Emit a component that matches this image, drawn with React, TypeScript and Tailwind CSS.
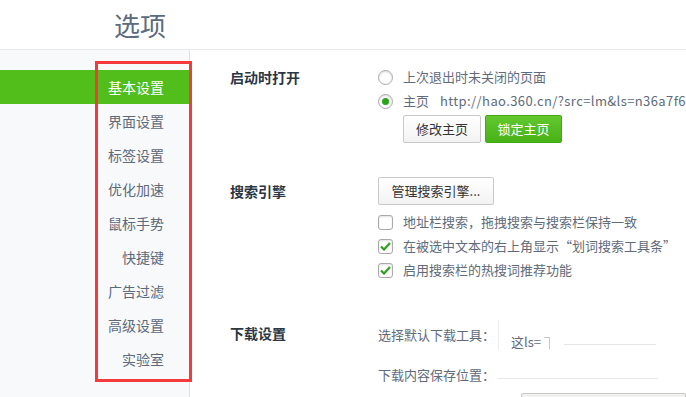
const font = { fontFamily: '"Noto Sans CJK SC", "Noto Sans", sans-serif' };

const navItems = ["基本设置", "界面设置", "标签设置", "优化加速", "鼠标手势", "快捷键", "广告过滤", "高级设置", "实验室"];

function Radio({ checked }: { checked?: boolean }) {
  return (
    <span className="flex h-[15px] w-[15px] shrink-0 items-center justify-center rounded-full border border-[#a9a9a9] bg-white shadow-[inset_0_1px_2px_rgba(0,0,0,0.15)]">
      {checked && <span className="h-[7px] w-[7px] rounded-full bg-[#2da21a]" />}
    </span>
  );
}

function Checkbox({ checked }: { checked?: boolean }) {
  return (
    <span className="flex h-[15px] w-[15px] shrink-0 items-center justify-center rounded-[3px] border border-[#a9a9a9] bg-white shadow-[inset_0_1px_2px_rgba(0,0,0,0.12)]">
      {checked && (
        <svg width="11" height="9" viewBox="0 0 11 9">
          <path d="M1 4.5 L4 7.5 L10 1" fill="none" stroke="#2da21a" strokeWidth="2.2" />
        </svg>
      )}
    </span>
  );
}

function Row({ children }: { children: React.ReactNode }) {
  return <div className="flex h-6 items-center gap-[10px] text-[13px] text-[#5f6b7a]">{children}</div>;
}

export default function App() {
  return (
    <div className="relative h-[397px] w-[686px] overflow-hidden bg-white" style={font}>
      {/* Header */}
      <div className="flex h-[50px] items-center border-b border-[#e8e9eb] pl-[114px]">
        <span className="text-[26px] leading-none text-[#5b6a7d]">选项</span>
      </div>

      <div className="flex">
        {/* Sidebar */}
        <div className="h-[347px] w-[190px] shrink-0 border-r border-[#dfe1e4] bg-[#f8f9fb] pt-5">
          {navItems.map((item, i) => (
            <div
              key={item}
              className={
                i === 0
                  ? "flex h-[34px] items-center justify-end bg-[#52be1b] pr-[25px] text-[14px] text-white"
                  : "flex h-[34px] items-center justify-end pr-[25px] text-[14px] text-[#5c6a7a]"
              }
            >
              {item}
            </div>
          ))}
        </div>

        {/* Main */}
        <div className="min-w-0 flex-1 pl-[40px] pt-[15px]">
          {/* Startup */}
          <div className="flex">
            <div className="flex h-6 w-[148px] shrink-0 items-center text-[14px] font-bold text-[#2b3644]">启动时打开</div>
            <div className="min-w-0 flex-1">
              <Row>
                <Radio />
                <span>上次退出时未关闭的页面</span>
              </Row>
              <Row>
                <Radio checked />
                <span className="whitespace-nowrap">
                  主页<span className="ml-[11px] tracking-[0.4px]">http://hao.360.cn/?src=lm&amp;ls=n36a7f6</span>
                </span>
              </Row>
              <div className="mt-[2px] flex gap-1 pl-[25px]">
                <button className="flex h-[28px] w-[78px] items-center justify-center rounded-[2px] border border-[#c9c9c9] bg-gradient-to-b from-white to-[#f3f3f3] text-[13px] text-[#333]">
                  修改主页
                </button>
                <button className="flex h-[28px] w-[77px] items-center justify-center rounded-[2px] border border-[#43a816] bg-gradient-to-b from-[#62c82e] to-[#47b216] text-[13px] text-white">
                  锁定主页
                </button>
              </div>
            </div>
          </div>

          {/* Search */}
          <div className="mt-[34px] flex">
            <div className="flex h-[28px] w-[148px] shrink-0 items-center text-[14px] font-bold text-[#2b3644]">搜索引擎</div>
            <div className="min-w-0 flex-1">
              <button className="flex h-[28px] w-[116px] items-center justify-center rounded-[2px] border border-[#c9c9c9] bg-gradient-to-b from-white to-[#f3f3f3] text-[13px] text-[#333]">
                管理搜索引擎...
              </button>
              <div className="mt-[5px]">
                <Row>
                  <Checkbox />
                  <span className="whitespace-nowrap">地址栏搜索，拖拽搜索与搜索栏保持一致</span>
                </Row>
                <Row>
                  <Checkbox checked />
                  <span className="whitespace-nowrap">在被选中文本的右上角显示“划词搜索工具条”</span>
                </Row>
                <Row>
                  <Checkbox checked />
                  <span className="whitespace-nowrap">启用搜索栏的热搜词推荐功能</span>
                </Row>
              </div>
            </div>
          </div>

          {/* Download */}
          <div className="mt-[41px] flex">
            <div className="flex h-5 w-[148px] shrink-0 items-center text-[14px] font-bold text-[#2b3644]">下载设置</div>
            <div className="min-w-0 flex-1">
              <div className="flex h-6 items-center text-[13px] text-[#5f6b7a]">
                <span className="whitespace-nowrap">选择默认下载工具：</span>
                <div className="ml-[3px] flex h-[30px] flex-1 items-center border-l border-[#ececec] pl-[12px]">
                  <span className="mt-[14px] text-[13px] text-[#5f6b7a]">这ls=</span>
                  <span className="ml-[3px] mt-[16px] h-[12px] w-[6px] border-r border-t border-[#c8c8c8]" />
                  <span className="ml-[14px] mt-[18px] h-px w-[92px] bg-[#e6e6e6]" />
                </div>
              </div>
              <div className="mt-[16px] flex h-6 items-center text-[13px] text-[#5f6b7a]">
                <span className="whitespace-nowrap">下载内容保存位置：</span>
                <span className="ml-[3px] mt-[6px] h-px w-[160px] bg-[#e8e8e8]" />
              </div>
              <div className="ml-[143px] mt-[6px] h-5 rounded-t-[2px] border border-[#c8c8c8] bg-[#f1f1ef]" />
            </div>
          </div>
        </div>
      </div>

      {/* Annotation box */}
      <div className="pointer-events-none absolute left-[95px] top-[61px] h-[321px] w-[97px] border-[3px] border-[#f43a3a]" />
    </div>
  );
}
